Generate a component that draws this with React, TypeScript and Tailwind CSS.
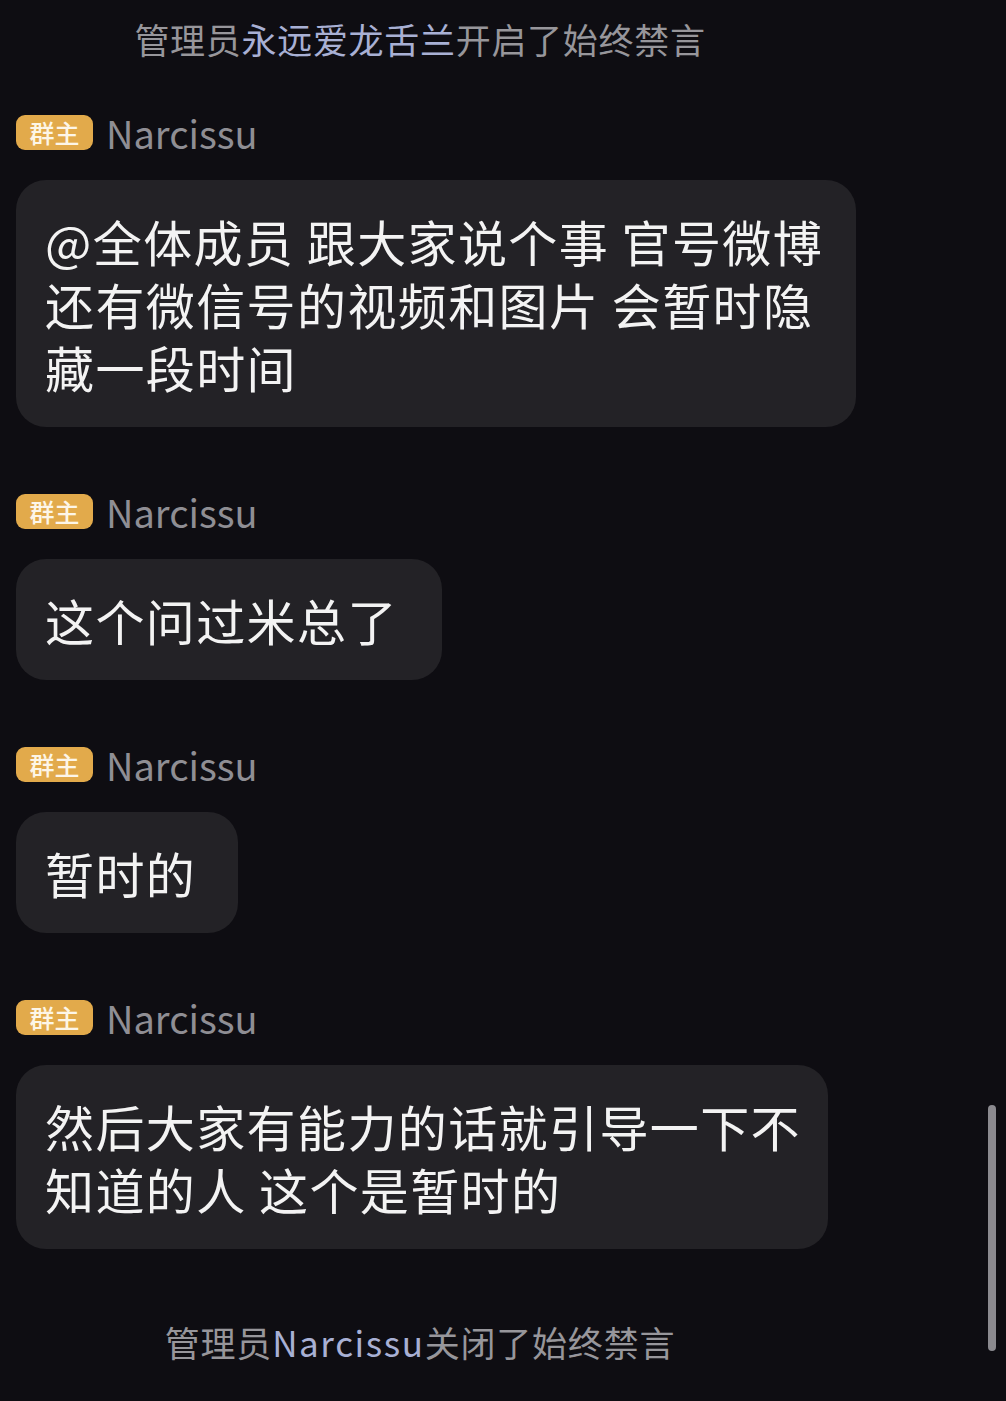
import React from 'react';

interface Message {
  lines: string[];
  width: string;
}

const messages: Message[] = [
  { lines: ['@全体成员 跟大家说个事 官号微博', '还有微信号的视频和图片 会暂时隐', '藏一段时间'], width: 'w-[840px]' },
  { lines: ['这个问过米总了'], width: 'w-fit pr-[44px]' },
  { lines: ['暂时的'], width: 'w-fit pr-[42px]' },
  { lines: ['然后大家有能力的话就引导一下不', '知道的人 这个是暂时的'], width: 'w-[812px]' }
];

const FONT = "font-['Noto_Sans_CJK_SC','Noto_Sans',sans-serif]";

const SenderRow: React.FC = () => (
  <div className="flex items-center h-[35px]">
    <span className="flex items-center justify-center w-[77px] h-[35px] rounded-[9px] bg-[#e2aa4b] text-[#fdf6e8] text-[25px] font-medium leading-none">
      群主
    </span>
    <span className="ml-[13px] text-[38px] leading-none text-[#8f8e94]">Narcissu</span>
  </div>
);

const Bubble: React.FC<Message> = ({ lines, width }) => (
  <div className={`mt-[30px] ${width} rounded-[30px] bg-[#232226] pl-[29px] py-[29px] text-[49px] tracking-[1.4px] leading-[63px] text-[#f3f3f3]`}>
    {lines.map((line, i) => (
      <div key={i} className="whitespace-pre">{line}</div>
    ))}
  </div>
);

export default function App() {
  return (
    <div className={`relative w-[1006px] h-[1401px] overflow-hidden bg-[#0e0d12] ${FONT}`}>
      <div className="w-[840px] pl-[16px]">
        {/* system notice */}
        <div className="pt-[19px] -ml-[16px] text-center text-[35px] tracking-[0.7px] leading-[40px] text-[#97969b]">
          管理员<span className="text-[#a8b0d4]">永远爱龙舌兰</span>开启了始终禁言
        </div>

        <div className="mt-[56px]">
          {messages.map((m, i) => (
            <div key={i} className={i === 0 ? '' : 'mt-[67px]'}>
              <SenderRow />
              <Bubble lines={m.lines} width={m.width} />
            </div>
          ))}
        </div>

        <div className="mt-[73px] -ml-[16px] text-center text-[35px] tracking-[0.8px] leading-[40px] text-[#97969b]">
          管理员<span className="text-[#a8b0d4] tracking-[1.6px]">Narcissu</span>关闭了始终禁言
        </div>
      </div>

      {/* scrollbar */}
      <div className="absolute left-[988px] top-[1105px] w-[8px] h-[246px] rounded-full bg-[#8b8a8f]" />
    </div>
  );
}
